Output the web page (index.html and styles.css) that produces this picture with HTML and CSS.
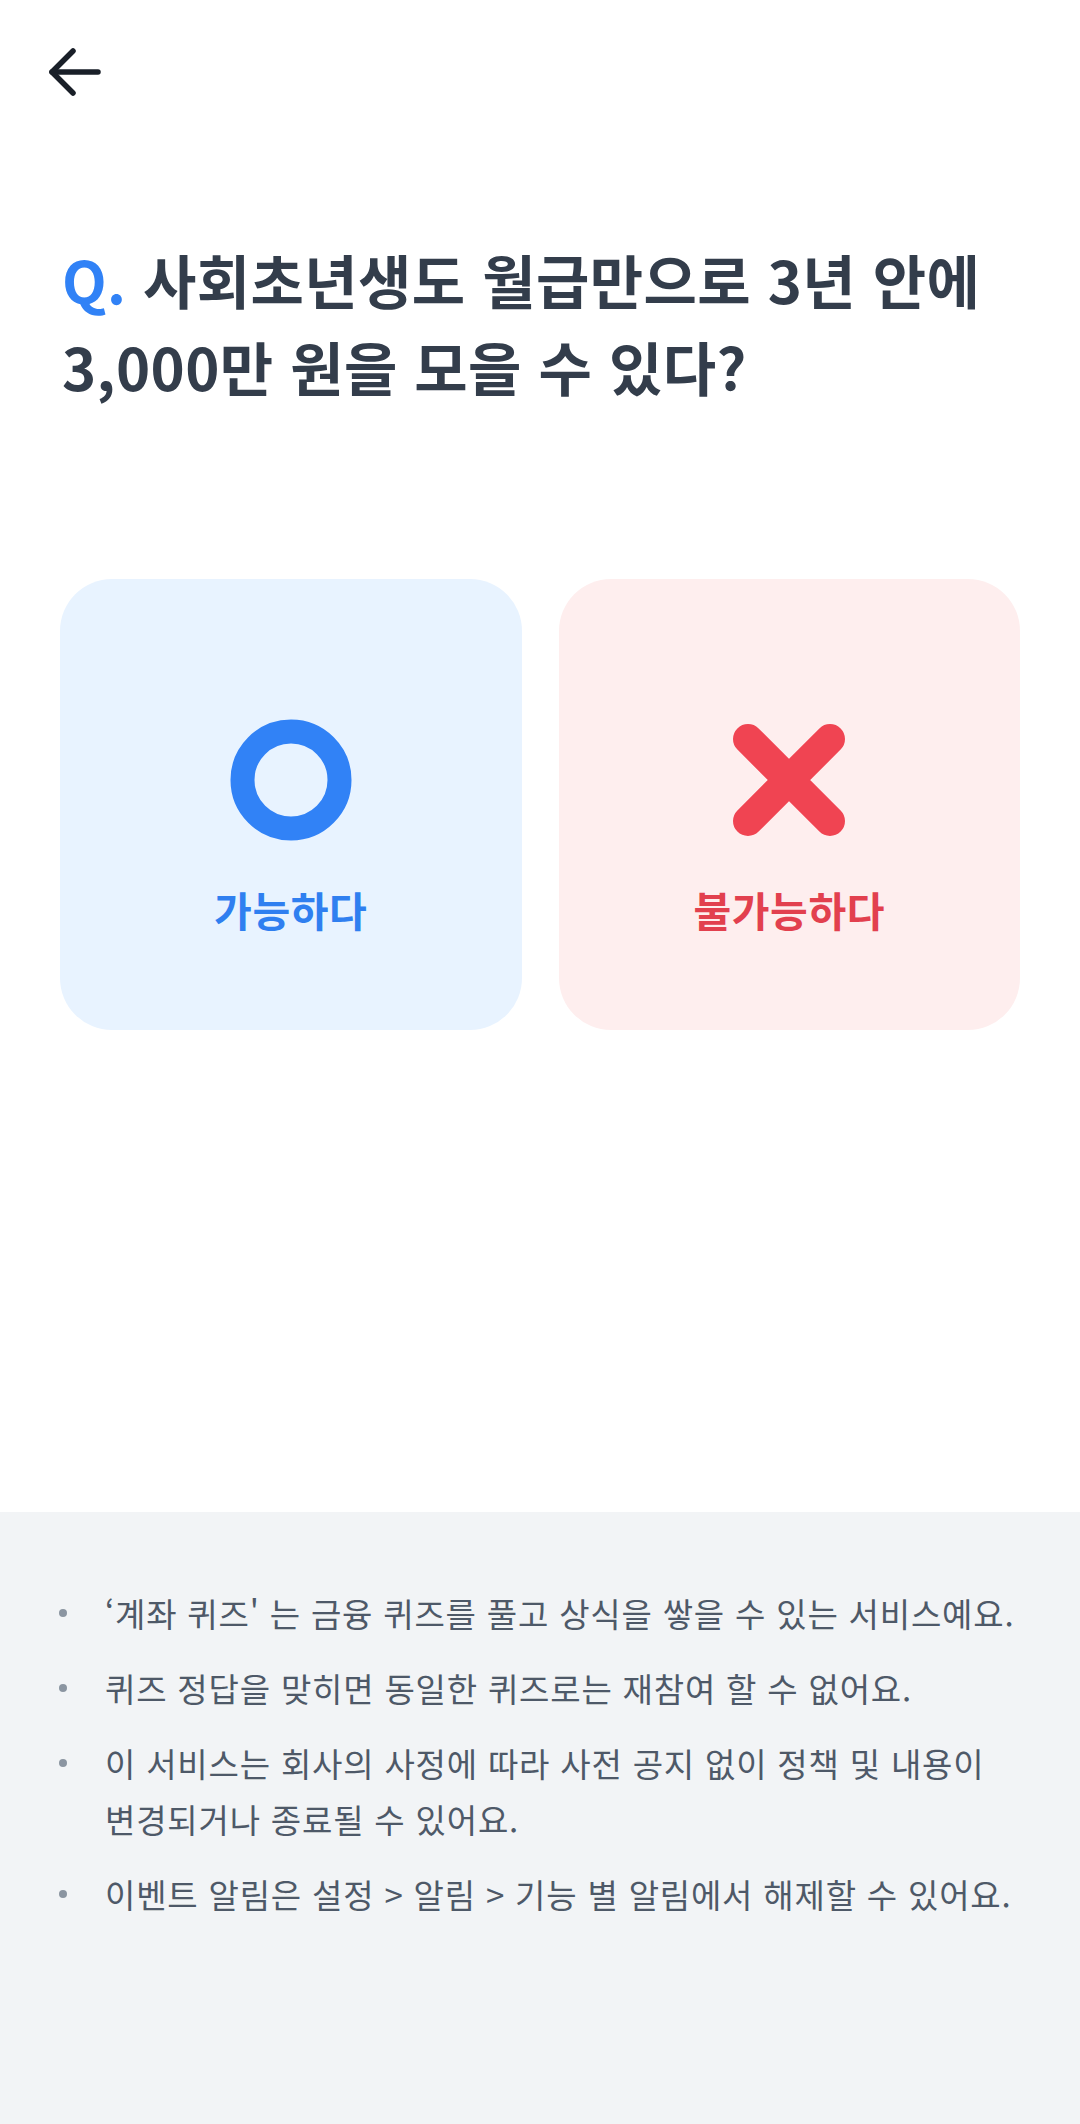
FILE: index.html
```html
<!DOCTYPE html>
<html lang="ko">
<head>
<meta charset="utf-8">
<title>계좌 퀴즈</title>
<link rel="stylesheet" href="styles.css">
</head>
<body>
<div class="page">
  <header class="topbar">
    <button class="back" aria-label="뒤로가기">
      <svg width="60" height="60" viewBox="0 0 60 60" fill="none" stroke="#191f28" stroke-width="5.5" stroke-linecap="round" stroke-linejoin="round">
        <path d="M8 30 H54"/>
        <path d="M29 9 L8 30 L29 51"/>
      </svg>
    </button>
  </header>

  <main class="main">
    <h1 class="question"><span class="q">Q.</span> 사회초년생도 월급만으로 3년 안에<br>3,000만 원을 모을 수 있다?</h1>

    <div class="choices">
      <button class="choice choice-yes">
        <svg class="icon" width="122" height="122" viewBox="0 0 122 122">
          <circle cx="61" cy="61" r="48.5" fill="none" stroke="#3182f6" stroke-width="24"/>
        </svg>
        <span class="label">가능하다</span>
      </button>
      <button class="choice choice-no">
        <svg class="icon" width="122" height="122" viewBox="0 0 122 122">
          <path d="M20 20 L102 102 M102 20 L20 102" stroke="#f04452" stroke-width="30" stroke-linecap="round" fill="none"/>
        </svg>
        <span class="label">불가능하다</span>
      </button>
    </div>
  </main>

  <footer class="notice">
    <ul class="notice-list">
      <li>‘계좌 퀴즈' 는 금융 퀴즈를 풀고 상식을 쌓을 수 있는 서비스예요.</li>
      <li>퀴즈 정답을 맞히면 동일한 퀴즈로는 재참여 할 수 없어요.</li>
      <li>이 서비스는 회사의 사정에 따라 사전 공지 없이 정책 및 내용이 변경되거나 종료될 수 있어요.</li>
      <li>이벤트 알림은 설정 &gt; 알림 &gt; 기능 별 알림에서 해제할 수 있어요.</li>
    </ul>
  </footer>
</div>
</body>
</html>
```

FILE: styles.css
```css
* {
  box-sizing: border-box;
}

html, body {
  margin: 0;
  padding: 0;
  background: #ffffff;
}

body {
  font-family: "Noto Sans CJK KR", "Noto Sans", sans-serif;
  color: #333d4b;
  word-break: keep-all;
}

.page {
  min-height: 100vh;
  display: flex;
  flex-direction: column;
}

.topbar {
  padding: 42px 0 0 44px;
  height: 102px;
}

.back {
  display: block;
  width: 60px;
  height: 60px;
  padding: 0;
  border: 0;
  background: transparent;
}

.back svg {
  display: block;
}

.main {
  flex: 1;
  padding: 0 60px;
}

.question {
  margin: 134px -40px 0 0;
  padding-left: 2px;
  font-size: 58px;
  line-height: 87px;
  font-weight: 700;
  color: #333d4b;
  letter-spacing: 0.4px;
  white-space: nowrap;
}

.q {
  color: #3182f6;
}

.choices {
  margin-top: 169px;
  display: grid;
  grid-template-columns: 1fr 1fr;
  gap: 37px;
}

.choice {
  height: 451px;
  border: 0;
  border-radius: 52px;
  padding: 140px 0 0;
  display: flex;
  flex-direction: column;
  align-items: center;
  font-family: inherit;
}

.choice .icon {
  display: block;
}

.choice-yes {
  background: #e8f3ff;
}

.choice-no {
  background: #feeeee;
}

.label {
  margin-top: 40px;
  font-size: 41px;
  line-height: 56px;
  font-weight: 700;
  letter-spacing: 0.6px;
}

.choice-yes .label {
  color: #2f7ff0;
}

.choice-no .label {
  color: #e2404e;
}

.notice {
  background: #f2f4f6;
  padding: 73px 30px 202px 60px;
}

.notice-list {
  list-style: none;
  margin: 0;
  padding: 0;
  display: flex;
  flex-direction: column;
  gap: 19px;
}

.notice-list li {
  position: relative;
  padding-left: 45px;
  font-size: 33px;
  line-height: 56px;
  color: #4e5968;
  letter-spacing: 0.8px;
}

.notice-list li::before {
  content: "";
  position: absolute;
  left: -1px;
  top: 24px;
  width: 8px;
  height: 8px;
  border-radius: 50%;
  background: #8b95a1;
}
```
